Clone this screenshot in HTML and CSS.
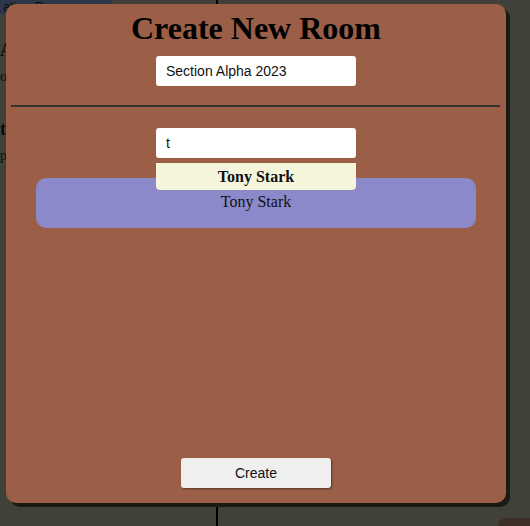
FILE: index.html
```html
<!DOCTYPE html>
<html>
    <head>
        <title>Create New Room</title>
        <link rel="stylesheet" href="styles.css">
    </head>
    <body>
        <div class="layout">
            <div class="sidebar">
                <div class="nav_tab">ation Rooms</div>
                <div class="room_item">
                    <h3>Alpha</h3>
                    <p>owner</p>
                </div>
                <div class="room_item">
                    <h3>test</h3>
                    <p>private</p>
                </div>
            </div>
            <div class="main"></div>
        </div>
        <div class="corner_blob"></div>

        <div class="modal">
            <h1>Create New Room</h1>
            <div class="field_row">
                <input type="text" class="text_in" value="Section Alpha 2023">
            </div>
            <hr class="divider">
            <div class="search_area">
                <div class="field_row">
                    <input type="text" class="text_in" value="t">
                </div>
                <div class="member_card">Tony Stark</div>
                <div class="suggest">Tony Stark</div>
            </div>
            <div class="spacer"></div>
            <div class="field_row">
                <button type="button" class="create_btn">Create</button>
            </div>
        </div>
    </body>
</html>
```

FILE: styles.css
```css
body {
	margin: 0;
	background: #41413a;
	font-family: "Liberation Serif", "Times New Roman", serif;
	width: 530px;
	height: 526px;
	overflow: hidden;
	position: relative;
}
.layout {
	display: flex;
	height: 526px;
}
.sidebar {
	width: 216px;
	border-right: 2px solid #000;
	color: #0c0c0a;
}
.nav_tab {
	width: 109px;
	height: 14px;
	padding-left: 3px;
	background: #2d3649;
	color: #0c0c0a;
	font-family: "Liberation Sans", Arial, sans-serif;
	font-size: 13px;
	line-height: 14px;
	overflow: hidden;
	white-space: nowrap;
}
.room_item {
	padding: 26px 0 8px 0;
}
.room_item h3 {
	margin: 0;
	font-size: 18px;
}
.room_item p {
	margin: 8px 0 0 0;
	font-size: 14px;
}
.corner_blob {
	position: absolute;
	left: 498px;
	top: 518px;
	width: 32px;
	height: 8px;
	border-radius: 10px 0 0 0;
	background: #3e2e28;
}
.modal {
	position: absolute;
	left: 6px;
	top: 4px;
	width: 500px;
	height: 499px;
	background: #9b5f48;
	border-radius: 10px;
	box-shadow: 4px 4px 0 #1b1b16;
	display: flex;
	flex-direction: column;
}
h1 {
	margin: 6px 0 0 0;
	text-align: center;
	font-size: 32px;
	line-height: 36px;
	color: #000;
}
.field_row {
	display: flex;
	justify-content: center;
}
.text_in {
	box-sizing: border-box;
	width: 200px;
	height: 30px;
	border: none;
	border-radius: 3px;
	padding: 0 10px;
	background: #fff;
	font-family: "Liberation Sans", Arial, sans-serif;
	font-size: 14px;
	color: #111;
	outline: none;
}
.modal > .field_row:first-of-type {
	margin-top: 10px;
}
.divider {
	margin: 19px 6px 0 5px;
	border: none;
	height: 2px;
	background: #333;
}
.search_area {
	position: relative;
	margin-top: 21px;
}
.member_card {
	margin: 20px 30px 0 30px;
	height: 50px;
	border-radius: 10px;
	background: #8b89c9;
	color: #111;
	font-size: 16px;
	text-align: center;
	line-height: 48px;
}
.suggest {
	position: absolute;
	left: 150px;
	top: 35px;
	width: 200px;
	height: 27px;
	background: #f5f5dc;
	border-radius: 0 0 4px 4px;
	text-align: center;
	font-weight: bold;
	font-size: 16px;
	line-height: 27px;
	color: #111;
}
.spacer {
	flex: 1;
}
.create_btn {
	width: 150px;
	height: 30px;
	margin-bottom: 15px;
	border: none;
	border-radius: 3px;
	background: #efefef;
	box-shadow: 1px 1px 2px #5a3527;
	font-family: "Liberation Sans", Arial, sans-serif;
	font-size: 14px;
	color: #111;
}
```
